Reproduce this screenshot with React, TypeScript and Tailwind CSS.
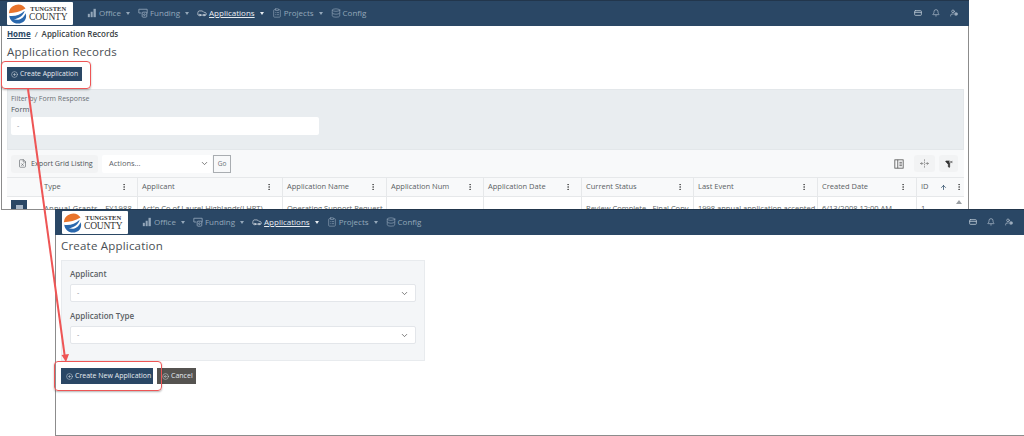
import {
  ArrowUp,
  Bell,
  Car,
  ChevronDown,
  CircleArrowLeft,
  CirclePlus,
  ClipboardList,
  CreditCard,
  Database,
  EllipsisVertical,
  FileX,
  FunnelX,
  UnfoldHorizontal,
  UserCog,
} from 'lucide-react';

function OfficeIcon({ className }: { className?: string }) {
  return (
    <svg viewBox="0 0 12 12" className={className} fill="currentColor">
      <rect x="1" y="7" width="2.4" height="4" />
      <rect x="4.4" y="4.5" width="2.4" height="6.5" />
      <rect x="7.8" y="1" width="2.8" height="10" />
    </svg>
  );
}

function FundingIcon({ className }: { className?: string }) {
  return (
    <svg viewBox="0 0 12 12" className={className} fill="none" stroke="currentColor" strokeWidth="1">
      <path d="M1 1.5 H11 V6.5 M1 1.5 V6 H4" />
      <rect x="5" y="5" width="5.5" height="6" rx="1" />
      <circle cx="7.7" cy="8" r="1" />
    </svg>
  );
}

const navItems = [
  { label: 'Office', icon: OfficeIcon, caret: true },
  { label: 'Funding', icon: FundingIcon, caret: true },
  { label: 'Applications', icon: Car, caret: true, active: true },
  { label: 'Projects', icon: ClipboardList, caret: true },
  { label: 'Config', icon: Database, caret: false },
];

const columns = [
  { title: 'Type', cell: 'Annual Grants - FY1988' },
  { title: 'Applicant', cell: "Act'n Co of Laurel Highlands(LHRT)" },
  { title: 'Application Name', cell: 'Operating Support Request' },
  { title: 'Application Num', cell: '' },
  { title: 'Application Date', cell: '' },
  { title: 'Current Status', cell: 'Review Complete - Final Copy' },
  { title: 'Last Event', cell: '1998 annual application accepted' },
  { title: 'Created Date', cell: '6/13/2008 12:00 AM' },
];

function Logo() {
  return (
    <div className="flex h-[23px] w-[66px] items-center gap-[1px] overflow-hidden rounded-[1px] bg-white pl-[1px]">
      <svg viewBox="0 0 24 24" className="h-[20px] w-[20px] shrink-0">
        <circle cx="12" cy="12" r="11.5" fill="#fff" />
        <path d="M1 11 A11 11 0 0 1 21 5.5 C15 9 8 11 1 11 Z" fill="#e8742c" />
        <path d="M1.5 14 C8 15 15 13 20 8 C19 13 13 18 7 18 C11 20 18 19 21 11 C24 18 18 23.5 12 23.5 C6 23.5 2 19 1.5 14 Z" fill="#2a68ad" />
      </svg>
      <div className="flex flex-col items-center font-['Liberation_Serif',serif] leading-none text-[#333]">
        <span className="text-[6.5px] font-bold leading-[7px]">TUNGSTEN</span>
        <span className="text-[9.5px] leading-[10px] tracking-[-0.2px]">COUNTY</span>
      </div>
    </div>
  );
}

function Header() {
  return (
    <div className="flex h-[26px] shrink-0 items-center justify-between border-t border-[#22364c] bg-[#2a4765] pl-[7px] pr-[11px]">
      <div className="flex items-center">
        <Logo />
        <nav className="-mt-px ml-[14px] flex items-center gap-[8px] text-[8px]">
          {navItems.map((item) => {
            const Icon = item.icon;
            return (
              <div
                key={item.label}
                className={item.active ? 'flex items-center text-[#e8edf2]' : 'flex items-center text-[#94a7ba]'}
              >
                <Icon className="mr-[2px] h-[10px] w-[10px]" strokeWidth={1.5} />
                <span className={item.active ? 'underline' : ''}>{item.label}</span>
                {item.caret && (
                  <span className="ml-[5px] h-0 w-0 border-x-[2.5px] border-t-[3px] border-x-transparent border-t-current" />
                )}
              </div>
            );
          })}
        </nav>
      </div>
      <div className="-mt-px flex items-center gap-[10px] text-[#b9c6d3]">
        <CreditCard className="h-[8px] w-[8px]" strokeWidth={2.5} />
        <Bell className="h-[8px] w-[8px]" strokeWidth={2} />
        <UserCog className="h-[8px] w-[8px]" strokeWidth={2} />
      </div>
    </div>
  );
}

function Select({ label, wide }: { label: string; wide?: boolean }) {
  return (
    <div
      className={
        wide
          ? 'flex h-[18px] items-center justify-between rounded-[2px] border border-[#e3e6ea] bg-white pl-[6px] pr-[6px] text-[7px] text-[#8a9097]'
          : 'flex h-[18px] w-[110px] items-center justify-between rounded-[2px] bg-white pl-[7px] pr-[3px] text-[7.5px] text-[#5c6268]'
      }
    >
      <span>{label}</span>
      <ChevronDown className="h-[9px] w-[9px] text-[#555]" strokeWidth={2} />
    </div>
  );
}

function BackWindow() {
  return (
    <div className="absolute left-0 top-0 flex h-[210px] w-[969px] flex-col overflow-hidden">
      <Header />
      <div className="ml-px min-h-0 flex-1 overflow-hidden border-x border-b border-[#8c8c8c] bg-white pl-[5px] pr-[4px]">
        <div className="flex h-[15px] items-center gap-[4px] text-[8px] font-semibold text-[#3a3f44]">
          <span className="font-bold text-[#2a4765] underline">Home</span>
          <span className="font-normal">/</span>
          <span>Application Records</span>
        </div>
        <div className="mt-[3px] text-[11.5px] leading-[16px] tracking-[0.2px] text-[#4a4f54]">Application Records</div>
        <div className="mt-[7px] flex h-[14px] w-[75px] items-center gap-[2px] whitespace-nowrap bg-[#2a4765] pl-[4px] text-[6.8px] text-[#e6ebf0]">
          <CirclePlus className="h-[7px] w-[7px]" strokeWidth={1.5} />
          Create Application
        </div>
        <div className="mt-[8px] h-[61px] border border-[#e3e7ea] bg-[#e9edf0] px-[3px] pt-[4px]">
          <div className="text-[7px] leading-[9px] text-[#6b7076]">Filter by Form Response</div>
          <div className="mt-[1px] text-[7.5px] leading-[11px] text-[#4f5459]">Form</div>
          <div className="mt-[2px] flex h-[18px] w-[308px] items-center rounded-[2px] bg-white pl-[6px] text-[7px] text-[#8a9097]">-</div>
        </div>
        <div className="flex h-[27px] items-center justify-between bg-[#f8f9fa] pl-[4px] pr-[6px]">
          <div className="flex items-center">
            <div className="flex h-[18px] w-[87px] items-center gap-[4px] rounded-[3px] bg-[#f2f3f4] pl-[7px] text-[7.2px] text-[#4f5459]">
              <FileX className="h-[9px] w-[9px]" strokeWidth={1.5} />
              Export Grid Listing
            </div>
            <div className="ml-[4px]">
              <Select label="Actions..." />
            </div>
            <div className="ml-px flex h-[18px] w-[18px] items-center justify-center border border-[#a9adb1] text-[6.5px] text-[#6b7076]">Go</div>
          </div>
          <div className="flex items-center gap-[4px] text-[#555]">
            <svg viewBox="0 0 12 12" className="mr-[6px] h-[10px] w-[10px]" fill="none" stroke="currentColor" strokeWidth="1">
              <rect x="1" y="1" width="10" height="10" />
              <path d="M4.5 1 V11 M6.5 4 H9.5 M6.5 6 H9.5 M6.5 8 H9.5" />
            </svg>
            <div className="flex h-[17px] w-[21px] items-center justify-center rounded-[3px] bg-[#f2f3f4]">
              <UnfoldHorizontal className="h-[9px] w-[9px]" strokeWidth={1.5} />
            </div>
            <div className="flex h-[17px] w-[19px] items-center justify-center rounded-[3px] bg-[#f2f3f4] text-[#333]">
              <FunnelX className="h-[8px] w-[8px]" fill="currentColor" strokeWidth={2} />
            </div>
          </div>
        </div>
        <div className="grid grid-cols-[33px_98px_145px_104px_97px_98px_112px_124px_99px_47px] text-[7.5px] text-[#5a5f64]">
          <div className="h-[20px] border-y border-[#e6e8ea] bg-[#f8f9fa]" />
          {columns.map((col) => (
            <div key={col.title} className="flex h-[20px] items-center justify-between border-y border-r border-[#e6e8ea] bg-[#f8f9fa] pl-[4px] pr-[9px]">
              {col.title}
              <EllipsisVertical className="h-[8px] w-[8px] text-[#333]" strokeWidth={2} />
            </div>
          ))}
          <div className="flex h-[20px] items-center justify-between border-y border-[#e6e8ea] bg-[#f8f9fa] pl-[4px] pr-px">
            <span className="flex items-center gap-[11px]">
              ID
              <ArrowUp className="h-[7px] w-[7px] text-[#2a4765]" strokeWidth={2.5} />
            </span>
            <EllipsisVertical className="h-[8px] w-[8px] text-[#333]" strokeWidth={2} />
          </div>
          <div className="pl-[4px] pt-[3px]">
            <div className="flex h-[16px] w-[16px] justify-center bg-[#2a4765] pt-[5px]">
              <div className="h-[4px] w-[7px] bg-[#a9b8c8]" />
            </div>
          </div>
          {columns.map((col, i) => (
            <div
              key={col.title}
              className={
                i === 0
                  ? 'truncate border-r border-[#e6e8ea] pl-[4px] pt-[6px] tracking-[0.3px]'
                  : 'truncate border-r border-[#e6e8ea] pl-[4px] pt-[6px]'
              }
            >
              {col.cell}
            </div>
          ))}
          <div className="flex justify-between pl-[4px] pr-[2px] pt-[6px]">
            1
            <span className="mt-[-3px] h-0 w-0 border-x-[3px] border-b-[4px] border-x-transparent border-b-[#9a9ea2]" />
          </div>
        </div>
      </div>
    </div>
  );
}

function FrontWindow() {
  return (
    <div className="absolute left-[55px] top-[209px] flex h-[227px] w-[969px] flex-col bg-white">
      <Header />
      <div className="flex-1 border-b border-l border-[#8c8c8c] pl-[5px]">
        <div className="mt-[2px] text-[11.5px] leading-[17px] tracking-[0.2px] text-[#4a4f54]">Create Application</div>
        <div className="mt-[6px] h-[101px] w-[364px] border border-[#e8ebee] bg-[#f4f6f8] px-[8px] pt-[7px] text-[8px] font-semibold text-[#5a5f64]">
          <div className="leading-[11px]">Applicant</div>
          <div className="mt-[5px] font-normal">
            <Select label="-" wide />
          </div>
          <div className="mt-[8px] leading-[11px]">Application Type</div>
          <div className="mt-[5px] font-normal">
            <Select label="-" wide />
          </div>
        </div>
        <div className="mt-[7px] flex items-center gap-[4px] whitespace-nowrap text-[7px] text-[#e6ebf0]">
          <div className="flex h-[16px] w-[92px] items-center gap-[2px] bg-[#2a4765] pl-[5px]">
            <CirclePlus className="h-[7px] w-[7px]" strokeWidth={1.5} />
            Create New Application
          </div>
          <div className="flex h-[16px] w-[39px] items-center gap-[2px] bg-[#555350] pl-[5px]">
            <CircleArrowLeft className="h-[7px] w-[7px]" strokeWidth={1.5} />
            Cancel
          </div>
        </div>
      </div>
    </div>
  );
}

export default function App() {
  return (
    <div className="relative h-[436px] w-[1024px] overflow-hidden bg-white font-['Open_Sans',sans-serif]">
      <BackWindow />
      <FrontWindow />
      {/* callouts drawn over both windows */}
      <div className="absolute left-[1px] top-[61px] h-[28px] w-[90px] rounded-[4px] border-[1.5px] border-[#ee5555] shadow-[0_1px_2px_rgba(0,0,0,0.3)]" />
      <div className="absolute left-[54px] top-[361px] h-[30px] w-[108px] rounded-[4px] border-[1.5px] border-[#ee5555] shadow-[0_1px_2px_rgba(0,0,0,0.3)]" />
      <svg className="absolute left-0 top-0 h-[436px] w-[1024px]" viewBox="0 0 1024 436">
        <path d="M28 89 L65 358" stroke="#ee5555" strokeWidth="2" fill="none" />
        <path d="M61.5 355 L69 354 L66 362 Z" fill="#ee5555" />
      </svg>
    </div>
  );
}
